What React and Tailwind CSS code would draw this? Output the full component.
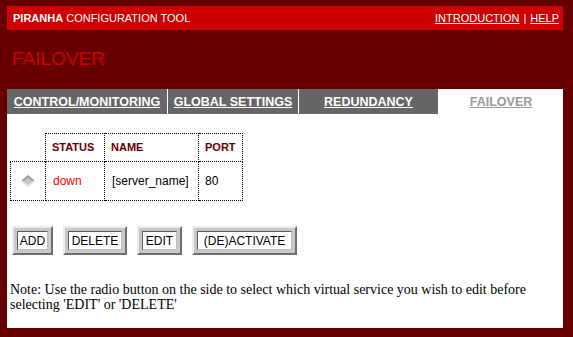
// Piranha configuration tool - failover page
import React from 'react';

const tabs = [
    { label: 'CONTROL/MONITORING', width: 'w-[160px]', active: false },
    { label: 'GLOBAL SETTINGS', width: 'w-[130px]', active: false },
    { label: 'REDUNDANCY', width: 'w-[139px]', active: false },
    { label: 'FAILOVER', width: 'flex-1', active: true },
];

const buttons = [
    { label: 'ADD', width: 'w-[41px]' },
    { label: 'DELETE', width: 'w-[64px]' },
    { label: 'EDIT', width: 'w-[45px]' },
    { label: '(DE)ACTIVATE', width: 'w-[105px]' },
];

const Diamond = () => (
    <svg width="14" height="12" viewBox="0 0 14 12">
        <polygon points="7,0 14,6 0,6" fill="#9a9a9a" />
        <polygon points="0,6 14,6 7,12" fill="#dcdcdc" />
        <polygon points="7,2.5 11,6 7,9.5 3,6" fill="#c4c4c4" />
    </svg>
);

const FormButton = ({ label, width }) => (
    <button
        className={`${width} h-[29px] bg-[#c8c8c8] border-2 border-t-[#ececec] border-l-[#ececec] border-b-[#6e6e6e] border-r-[#6e6e6e] p-[3px] flex`}
    >
        <span className="flex-1 flex items-center justify-center bg-white border border-t-[#5a5a5a] border-l-[#5a5a5a] border-b-[#bdbdbd] border-r-[#bdbdbd] text-[12px] text-black">
            {label}
        </span>
    </button>
);

export default function App() {
    return (
        <div className="w-[573px] h-[337px] bg-[#660000] px-[7px] pt-[6px] pr-[10px] font-['Liberation_Sans',Arial,sans-serif]">
            {/* Top bar */}
            <div className="h-[24px] bg-[#cc0000] flex items-center justify-between pl-[6px] pr-[4px] text-white text-[11px]">
                <div>
                    <span className="font-bold">PIRANHA</span> CONFIGURATION TOOL
                </div>
                <div className="flex items-center gap-[4px]">
                    <a className="underline">INTRODUCTION</a>
                    <span>|</span>
                    <a className="underline">HELP</a>
                </div>
            </div>

            {/* Page title */}
            <div className="h-[59px] pl-[5px] pt-[19px] text-[#cc0000] text-[19px] leading-none">
                FAILOVER
            </div>

            {/* Main panel */}
            <div className="h-[239px] bg-white">
                <div className="flex h-[25px] gap-px">
                    {tabs.map((tab) => (
                        <div
                            key={tab.label}
                            className={`${tab.width} flex items-center justify-center pt-[1px] font-bold text-[12.5px] underline ${tab.active ? 'bg-white text-[#999999]' : 'bg-[#666666] text-white'}`}
                        >
                            {tab.label}
                        </div>
                    ))}
                </div>

                {/* Virtual service table */}
                <table className="ml-[3px] mt-[19px] border-collapse text-[12px]">
                    <tbody>
                        <tr className="h-[28px]">
                            <td className="w-[35px]" />
                            <td className="w-[59px] border border-dotted border-black pl-[6px] font-bold text-[11px] text-[#660000]">STATUS</td>
                            <td className="w-[94px] border border-dotted border-black pl-[6px] font-bold text-[11px] text-[#660000]">NAME</td>
                            <td className="w-[44px] border border-dotted border-black pl-[6px] font-bold text-[11px] text-[#660000]">PORT</td>
                        </tr>
                        <tr className="h-[39px]">
                            <td className="border border-dotted border-black">
                                <div className="flex justify-center">
                                    <Diamond />
                                </div>
                            </td>
                            <td className="border border-dotted border-black pl-[7px] text-[#ff0000]">down</td>
                            <td className="border border-dotted border-black pl-[7px] text-black">[server_name]</td>
                            <td className="border border-dotted border-black pl-[6px] text-black">80</td>
                        </tr>
                    </tbody>
                </table>

                {/* Actions */}
                <div className="flex gap-[10px] ml-[5px] mt-[25px]">
                    {buttons.map((b) => (
                        <FormButton key={b.label} label={b.label} width={b.width} />
                    ))}
                </div>

                <p className="mt-[27px] pl-[3px] pr-[20px] font-['Liberation_Serif','Times_New_Roman',serif] text-[14px] leading-[15px] text-black">
                    Note: Use the radio button on the side to select which virtual service you wish to edit before selecting 'EDIT' or 'DELETE'
                </p>
            </div>
        </div>
    );
}
